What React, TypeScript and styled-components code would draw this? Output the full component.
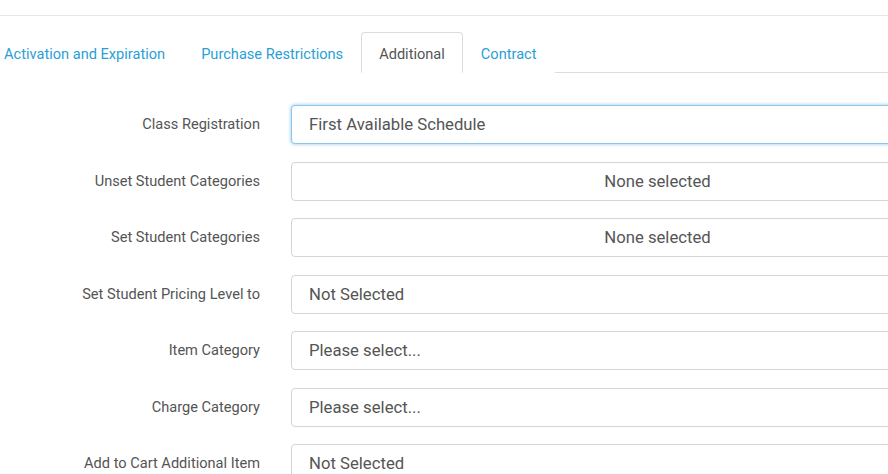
import React from "react";
import styled, { createGlobalStyle } from "styled-components";

const Global = createGlobalStyle`
  html, body { margin: 0; padding: 0; background: #fff; overflow: hidden; }
  body { font-family: Roboto, "Helvetica Neue", Arial, sans-serif; width: 888px; height: 474px; }
`;

const Page = styled.div`
  width: 888px;
  height: 474px;
  overflow: hidden;
`;

const TopRule = styled.div`
  height: 15px;
  border-bottom: 1px solid #e6e6e6;
`;

const TabList = styled.ul`
  list-style: none;
  margin: 16px 0 0 -14px;
  padding: 0;
  display: flex;
  height: 40px;
  border-bottom: 1px solid #dddddd;
  width: calc(100% + 14px);
`;

const Tab = styled.li<{ $active?: boolean }>`
  box-sizing: border-box;
  display: flex;
  align-items: center;
  height: 41px;
  padding: 2px 17px 0 17px;
  margin-bottom: -1px;
  font-size: 14.6px;
  border: 1px solid ${(p) => (p.$active ? "#dddddd" : "transparent")};
  border-bottom-color: ${(p) => (p.$active ? "#ffffff" : "transparent")};
  border-radius: 4px 4px 0 0;
  background: #fff;
  color: ${(p) => (p.$active ? "#555555" : "#2a9fd6")};
  white-space: nowrap;
`;

const Form = styled.div`
  margin-top: 32px;
  display: grid;
  grid-template-columns: 260px 732px;
  column-gap: 31px;
  row-gap: 17.5px;
`;

const Label = styled.div`
  display: flex;
  align-items: center;
  justify-content: flex-end;
  font-size: 14.6px;
  color: #555555;
  height: 39px;
  padding-bottom: 1px;
  box-sizing: border-box;
  white-space: nowrap;
`;

const Field = styled.div<{ $focus?: boolean; $center?: boolean }>`
  box-sizing: border-box;
  height: 39px;
  display: flex;
  align-items: center;
  justify-content: ${(p) => (p.$center ? "center" : "flex-start")};
  padding: 0 16px 0 17px;
  font-size: 16.7px;
  color: #555555;
  background: #fff;
  border: 1px solid ${(p) => (p.$focus ? "#8ec5ea" : "#d5d5d5")};
  border-radius: 4px;
  box-shadow: ${(p) =>
    p.$focus ? "0 0 3px 1px rgba(102, 175, 233, 0.45)" : "none"};
  white-space: nowrap;
`;

const rows: { label: string; value: string; focus?: boolean; center?: boolean }[] = [
  { label: "Class Registration", value: "First Available Schedule", focus: true },
  { label: "Unset Student Categories", value: "None selected", center: true },
  { label: "Set Student Categories", value: "None selected", center: true },
  { label: "Set Student Pricing Level to", value: "Not Selected" },
  { label: "Item Category", value: "Please select..." },
  { label: "Charge Category", value: "Please select..." },
  { label: "Add to Cart Additional Item", value: "Not Selected" },
];

const tabs = [
  { name: "Activation and Expiration" },
  { name: "Purchase Restrictions" },
  { name: "Additional", active: true },
  { name: "Contract" },
];

export default function App() {
  return (
    <Page>
      <Global />
      <TopRule />
      <TabList>
        {tabs.map((t) => (
          <Tab key={t.name} $active={t.active}>
            {t.name}
          </Tab>
        ))}
      </TabList>
      <Form>
        {rows.map((r) => (
          <React.Fragment key={r.label}>
            <Label>{r.label}</Label>
            <Field $focus={r.focus} $center={r.center}>
              {r.value}
            </Field>
          </React.Fragment>
        ))}
      </Form>
    </Page>
  );
}
